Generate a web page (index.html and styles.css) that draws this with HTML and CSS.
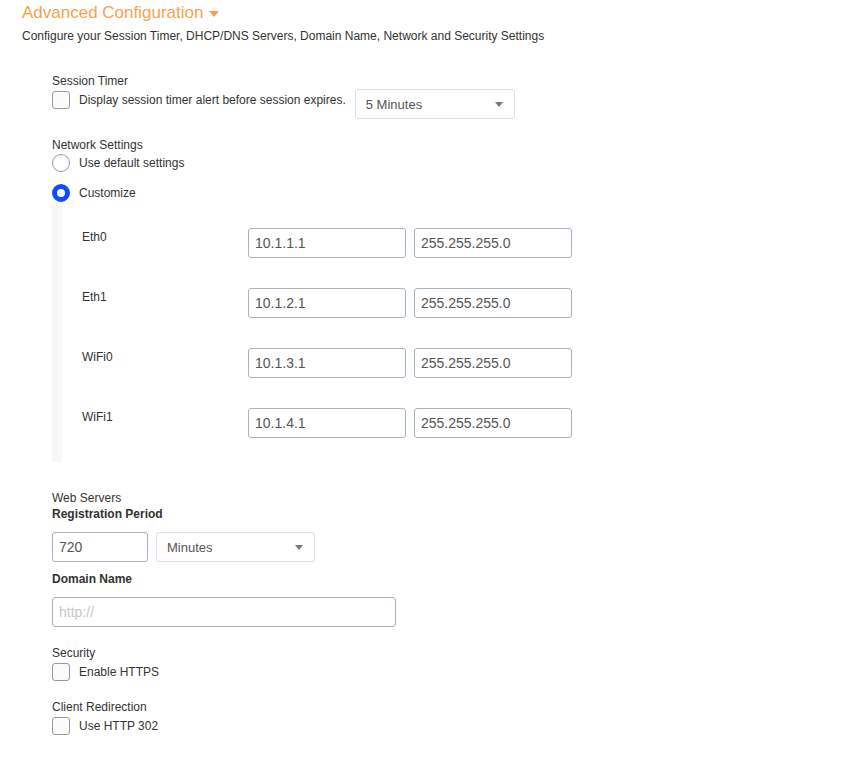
FILE: index.html
```html
<!DOCTYPE html>
<html lang="en">
<head>
    <meta charset="UTF-8">
    <meta name="viewport" content="width=device-width, initial-scale=1.0">
    <title>Advanced Configuration</title>

    <link rel="stylesheet" href="styles.css">
</head>
<body>
    <div class="config">
        <h2 class="config-title">Advanced Configuration <span class="caret-orange"></span></h2>
        <p class="config-sub">Configure your Session Timer, DHCP/DNS Servers, Domain Name, Network and Security Settings</p>

        <div class="config-body">

            <!-- Session timer -->
            <div class="group group-first">
                <div class="group-label">Session Timer</div>
                <div class="row-timer">
                    <label class="check">
                        <span class="box"></span>
                        <span>Display session timer alert before session expires.</span>
                    </label>
                    <div class="select select-timer">
                        <span>5 Minutes</span>
                        <span class="caret"></span>
                    </div>
                </div>
            </div>

            <!-- Network -->
            <div class="group">
                <div class="group-label">Network Settings</div>
                <label class="radio radio-first">
                    <span class="dot"></span>
                    <span>Use default settings</span>
                </label>
                <label class="radio radio-second">
                    <span class="dot dot-on"></span>
                    <span>Customize</span>
                </label>

                <div class="custom-panel">
                    <div class="net-row">
                        <span class="net-name">Eth0</span>
                        <input type="text" class="field field-ip" value="10.1.1.1">
                        <input type="text" class="field field-ip" value="255.255.255.0">
                    </div>
                    <div class="net-row">
                        <span class="net-name">Eth1</span>
                        <input type="text" class="field field-ip" value="10.1.2.1">
                        <input type="text" class="field field-ip" value="255.255.255.0">
                    </div>
                    <div class="net-row">
                        <span class="net-name">WiFi0</span>
                        <input type="text" class="field field-ip" value="10.1.3.1">
                        <input type="text" class="field field-ip" value="255.255.255.0">
                    </div>
                    <div class="net-row">
                        <span class="net-name">WiFi1</span>
                        <input type="text" class="field field-ip" value="10.1.4.1">
                        <input type="text" class="field field-ip" value="255.255.255.0">
                    </div>
                </div>
            </div>

            <!-- Web servers -->
            <div class="group group-web">
                <div class="group-label">Web Servers</div>
                <div class="bold-label">Registration Period</div>
                <div class="row-period">
                    <input type="text" class="field field-period" value="720">
                    <div class="select select-period">
                        <span>Minutes</span>
                        <span class="caret"></span>
                    </div>
                </div>
                <div class="bold-label label-domain">Domain Name</div>
                <input type="text" class="field field-domain" placeholder="http://">
            </div>

            <!-- Security -->
            <div class="group group-sec">
                <div class="group-label">Security</div>
                <label class="check check-line">
                    <span class="box"></span>
                    <span>Enable HTTPS</span>
                </label>
            </div>

            <div class="group group-redirect">
                <div class="group-label">Client Redirection</div>
                <label class="check check-line">
                    <span class="box"></span>
                    <span>Use HTTP 302</span>
                </label>
            </div>
        </div>
    </div>
</body>
</html>
```

FILE: styles.css
```css
:root{
    --laranja: #f7a24b;
    --texto: #333333;
    --borda-input: #a8b3c1;
    --borda-select: #dcdfe3;
    --azul: #0d4cff;
}

body{
    margin: 0;
    color: var(--texto);
    font-family: "Liberation Sans", Arial, sans-serif;
    font-size: 12px;
    background-color: #ffffff;
}

.config{
    padding-left: 22px;
    padding-top: 1px;
}

.config-title{
    margin: 0;
    font-size: 17px;
    font-weight: normal;
    line-height: 24px;
    color: var(--laranja);
    display: flex;
    align-items: center;
    gap: 6px;
}

.caret-orange{
    width: 0;
    height: 0;
    border-left: 5px solid transparent;
    border-right: 5px solid transparent;
    border-top: 6px solid var(--laranja);
    margin-top: 1px;
}

.config-sub{
    margin: 3px 0 0;
    line-height: 16px;
}

.config-body{
    padding-left: 30px;
}

.group-label{
    line-height: 16px;
    padding-top: 1px;
}

.group-first{
    margin-top: 28px;
}

.group{
    display: flex;
    flex-direction: column;
    align-items: flex-start;
}

.group + .group{
    margin-top: 17px;
}

.row-timer{
    display: flex;
    align-items: flex-start;
}

.check{
    display: flex;
    align-items: center;
    gap: 9px;
    line-height: 18px;
    margin-top: 2px;
}

.box{
    box-sizing: border-box;
    width: 18px;
    height: 18px;
    border: 1px solid #9a9a9a;
    border-radius: 3px;
    background-color: #fbfbfb;
}

.select{
    box-sizing: border-box;
    height: 30px;
    border: 1px solid var(--borda-select);
    border-radius: 3px;
    padding: 0 10px;
    display: flex;
    align-items: center;
    justify-content: space-between;
    font-size: 13px;
    color: #555555;
    background-color: #ffffff;
}

.select-timer{
    width: 160px;
    margin-left: 9px;
}

.caret{
    width: 0;
    height: 0;
    border-left: 4px solid transparent;
    border-right: 4px solid transparent;
    border-top: 5px solid #777777;
    margin-right: 1px;
}

.radio{
    display: flex;
    align-items: center;
    gap: 9px;
    line-height: 18px;
}

.radio-first{
    margin-top: 1px;
}

.radio-second{
    margin-top: 12px;
}

.dot{
    box-sizing: border-box;
    width: 18px;
    height: 18px;
    border: 1px solid #9a9a9a;
    border-radius: 50%;
    background-color: #ffffff;
}

.dot-on{
    border: 5px solid var(--azul);
}

.custom-panel{
    border-left: 10px solid #f7f7f7;
    padding: 26px 0 24px 20px;
    display: flex;
    flex-direction: column;
    gap: 30px;
}

.net-row{
    display: flex;
    align-items: flex-start;
    gap: 8px;
}

.net-name{
    width: 158px;
    line-height: 16px;
    margin-top: 1px;
}

.field{
    box-sizing: border-box;
    height: 30px;
    border: 1px solid var(--borda-input);
    border-radius: 3px;
    padding: 0 6px;
    font-family: "Liberation Sans", Arial, sans-serif;
    font-size: 14px;
    color: #555555;
    margin: 0;
}

.field::placeholder{
    color: #c8c8c8;
}

.field-ip{
    width: 158px;
}

.group-web{
    margin-top: 27px !important;
}

.bold-label{
    font-weight: bold;
    line-height: 16px;
}

.row-period{
    display: flex;
    gap: 8px;
    margin-top: 10px;
}

.field-period{
    width: 96px;
}

.select-period{
    width: 159px;
}

.label-domain{
    margin-top: 9px;
}

.field-domain{
    width: 344px;
    margin-top: 10px;
}

.check-line{
    margin-top: 2px;
}

.group-sec{
    margin-top: 17px;
}

.group-redirect{
    margin-top: 17px !important;
}
```
